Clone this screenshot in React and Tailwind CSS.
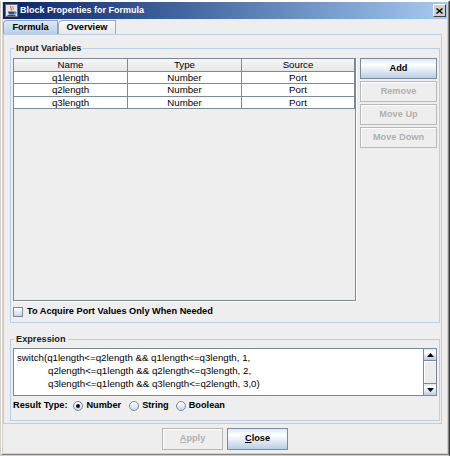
import React from "react";

const grad = "bg-linear-to-b from-[#dde8f3] via-white via-30% to-[#b8cfe5]";

function Button({ children, disabled, className = "" }) {
  return (
    <div
      className={`flex items-center justify-center border text-[9.2px] font-bold leading-none ${
        disabled
          ? "border-[#b8b8b8] bg-[#eeeeee] text-[#b0b0b0] shadow-[inset_1px_1px_0_#ffffff]"
          : `border-[#7a8a99] ${grad} text-black`
      } ${className}`}
    >
      {children}
    </div>
  );
}

function Radio({ checked }) {
  return (
    <div className="w-[10px] h-[10px] rounded-full border border-[#7a8a99] bg-linear-to-b from-white to-[#c8d8ea] flex items-center justify-center shrink-0">
      {checked && <div className="w-[4px] h-[4px] rounded-full bg-[#111]" />}
    </div>
  );
}

function ArrowUp() {
  return (
    <svg width="7" height="4" viewBox="0 0 7 4">
      <path d="M3.5 0 L7 4 L0 4 Z" fill="#000" />
    </svg>
  );
}
function ArrowDown() {
  return (
    <svg width="7" height="4" viewBox="0 0 7 4">
      <path d="M0 0 L7 0 L3.5 4 Z" fill="#000" />
    </svg>
  );
}

function JavaIcon() {
  return (
    <svg width="13" height="13" viewBox="0 0 13 13">
      <rect x="0.5" y="0.5" width="12" height="12" fill="#e4e4e4" stroke="#6b6b6b" />
      <path d="M6 2 C4.5 3.5 7.5 4.5 6 6.5" stroke="#e76f00" strokeWidth="1.2" fill="none" />
      <path d="M8 2.5 C7 3.5 9 4.2 8 5.5" stroke="#e76f00" strokeWidth="1" fill="none" />
      <path d="M3 7.5 L10 7.5 L9 10.5 L4 10.5 Z" fill="#1f4f8f" />
      <path d="M10 8 C11.5 8 11.5 10 9.5 10" stroke="#1f4f8f" strokeWidth="0.9" fill="none" />
      <rect x="2.5" y="11" width="8" height="1" fill="#1f4f8f" />
    </svg>
  );
}

export default function App() {
  const rows = ["q1length", "q2length", "q3length"];
  const rowH = ["h-[12px]", "h-[13px]", "h-[12px]"];
  return (
    <div className="w-[450px] h-[456px] bg-[#d4d0c8] border-r border-b border-[#404040] font-['Liberation_Sans',Arial,sans-serif] text-black select-none">
      <div className="ml-px mt-px w-[448px] h-[454px] border-l border-t border-white border-r border-b border-r-[#808080] border-b-[#808080] pl-px pr-px pb-px">
        <div className="flex flex-col h-full bg-[#eeeeee]">
          {/* Title bar */}
          <div className="h-[17px] shrink-0 flex items-center bg-linear-to-r from-[#0a246a] to-[#a6caf0] pl-[2px] pr-px">
            <JavaIcon />
            <span className="ml-[2px] text-[9px] font-bold text-white leading-none">
              Block Properties for Formula
            </span>
            <div className="flex-1" />
            <div className="w-[13px] h-[13px] bg-[#d4d0c8] border border-t-white border-l-white border-r-[#404040] border-b-[#404040] flex items-center justify-center">
              <svg width="7" height="6" viewBox="0 0 7 6">
                <path d="M0.5 0.5 L6.5 5.5 M6.5 0.5 L0.5 5.5" stroke="#000" strokeWidth="1.4" />
              </svg>
            </div>
          </div>

          {/* Tabs */}
          <div className="h-[15px] shrink-0 flex items-end">
            <div className="w-[55px] h-[14px] border-t border-l border-r border-[#8ea5be] rounded-tl-[4px] bg-linear-to-b from-[#dce8f5] to-[#b9cfe6] flex items-center justify-center text-[9.2px] font-bold leading-none">
              Formula
            </div>
            <div className="w-[58px] h-[14px] border-t border-r border-l border-[#9aa9b8] rounded-tl-[5px] bg-linear-to-b from-[#fafafa] to-[#e8e8e8] flex items-center justify-center text-[9.2px] font-bold leading-none">
              Overview
            </div>
          </div>

          {/* Tab panel */}
          <div className="w-[439px] h-[390px] shrink-0 border border-[#b8cfe5] pt-[7px] pl-[6px] pb-[2px] flex flex-col">
            <fieldset className="w-[430px] border border-[#b8cfe5] px-[2px] pt-[3px] pb-[4px] m-0 min-w-0">
              <legend className="ml-[1px] px-[2px] text-[9.2px] font-bold leading-[13px] text-[#222]">
                Input Variables
              </legend>
              <div className="flex gap-[4px] h-[243px]">
                <div className="w-[343px] h-[243px] border border-[#7a8a99] bg-[#eeeeee] shadow-[1px_1px_0_#ffffff]">
                  <div className="flex h-[13px] border-b border-[#7a8a99] bg-linear-to-b from-[#f6f6f6] to-[#e6e6e6] text-[9.7px] leading-none">
                    <div className="w-[114px] border-r border-[#7a8a99] flex items-center justify-center">Name</div>
                    <div className="w-[114px] border-r border-[#7a8a99] flex items-center justify-center">Type</div>
                    <div className="w-[113px] border-r border-[#7a8a99] flex items-center justify-center">Source</div>
                  </div>
                  {rows.map((r, i) => (
                    <div key={r} className={`flex ${rowH[i]} border-b border-[#7a8a99] bg-white text-[9.7px] leading-none`}>
                      <div className="w-[114px] border-r border-[#7a8a99] flex items-center justify-center">{r}</div>
                      <div className="w-[114px] border-r border-[#7a8a99] flex items-center justify-center">Number</div>
                      <div className="w-[113px] border-r border-[#7a8a99] flex items-center justify-center">Port</div>
                    </div>
                  ))}
                </div>
                <div className="w-[77px] flex flex-col gap-[2px]">
                  <Button className="h-[21px]">Add</Button>
                  <Button className="h-[21px]" disabled>Remove</Button>
                  <Button className="h-[21px]" disabled>Move Up</Button>
                  <Button className="h-[21px]" disabled>Move Down</Button>
                </div>
              </div>
              <div className="mt-[4px] h-[13px] flex items-center">
                <div className="w-[10px] h-[10px] border border-[#7a8a99] bg-linear-to-b from-white to-[#c8d8ea]" />
                <span className="ml-[4px] text-[9.2px] font-bold leading-none">
                  To Acquire Port Values Only When Needed
                </span>
              </div>
            </fieldset>

            <fieldset className="mt-[10px] w-[430px] border border-[#b8cfe5] px-[2px] pt-[2px] pb-[8px] m-0 min-w-0">
              <legend className="ml-[1px] px-[2px] text-[9.2px] font-bold leading-[13px] text-[#222]">
                Expression
              </legend>
              <div className="h-[48px] border border-[#7a8a99] bg-white flex">
                <div className="flex-1 pl-[3px] pt-[2px] text-[9.7px] leading-[13px] whitespace-pre">
                  <div>switch(q1length&lt;=q2length &amp;&amp; q1length&lt;=q3length, 1,</div>
                  <div className="pl-[31px]">q2length&lt;=q1length &amp;&amp; q2length&lt;=q3length, 2,</div>
                  <div className="pl-[31px]">q3length&lt;=q1length &amp;&amp; q3length&lt;=q2length, 3,0)</div>
                </div>
                <div className="w-[13px] border-l border-[#7a8a99] flex flex-col bg-[#eeeeee]">
                  <div className={`h-[12px] border-b border-[#7a8a99] flex items-center justify-center ${grad}`}>
                    <ArrowUp />
                  </div>
                  <div className="flex-1 border-b border-[#7a8a99] bg-[#ececec] shadow-[inset_1px_1px_0_#ffffff]" />
                  <div className={`h-[11px] flex items-center justify-center ${grad}`}>
                    <ArrowDown />
                  </div>
                </div>
              </div>
              <div className="mt-[4px] h-[12px] flex items-center text-[9.2px] font-bold leading-none">
                <span>Result Type:</span>
                <div className="ml-[6px]"><Radio checked /></div>
                <span className="ml-[3px]">Number</span>
                <div className="ml-[8px]"><Radio /></div>
                <span className="ml-[3px]">String</span>
                <div className="ml-[7px]"><Radio /></div>
                <span className="ml-[3px]">Boolean</span>
              </div>
            </fieldset>
          </div>

          {/* Bottom buttons */}
          <div className="flex-1 pt-[4px] flex justify-center gap-[4px]">
            <Button className="w-[61px] h-[22px]" disabled>
              <span><span className="underline">A</span>pply</span>
            </Button>
            <Button className="w-[61px] h-[22px]">
              <span><span className="underline">C</span>lose</span>
            </Button>
          </div>
        </div>
      </div>
    </div>
  );
}
